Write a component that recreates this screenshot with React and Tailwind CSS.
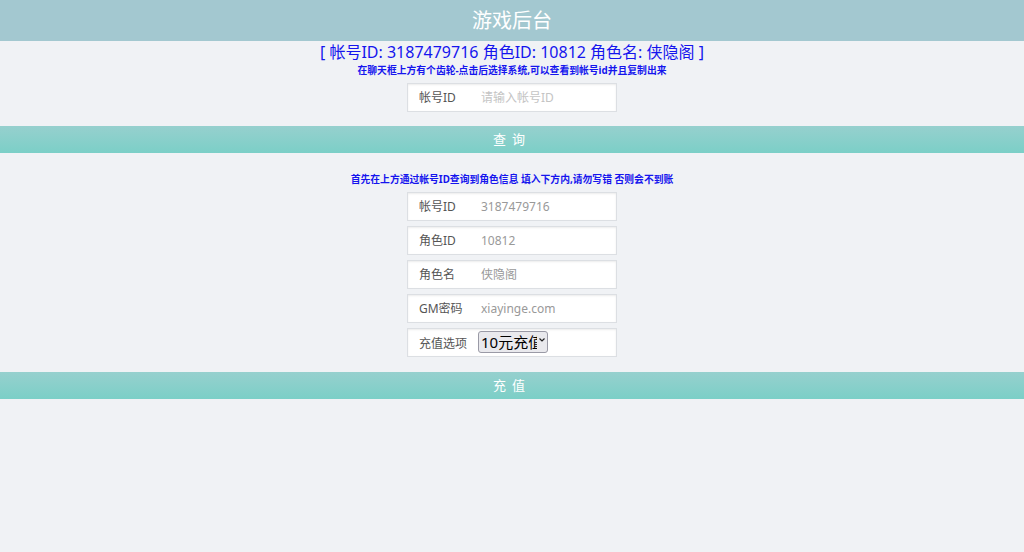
import React from "react";

const font = { fontFamily: '"Noto Sans", "Noto Sans CJK SC", sans-serif' };

function Field({ label, value, placeholder }) {
  return (
    <div className="flex items-center w-[210px] h-[29px] bg-white border border-[#dcdfe3] shadow-[inset_0_1px_2px_rgba(0,0,0,0.08)]">
      <span className="w-[73px] pl-[11px] text-[12px] text-[#555]">{label}</span>
      {value !== undefined ? (
        <span className="text-[12px] text-[#999]">{value}</span>
      ) : (
        <span className="text-[12px] text-[#c4c4c4]">{placeholder}</span>
      )}
    </div>
  );
}

function Bar({ text }) {
  return (
    <div className="w-full h-[27px] bg-gradient-to-b from-[#96d0ce] to-[#7bcfc7] flex items-center justify-center text-white text-[13px] tracking-[6px]">
      {text}
    </div>
  );
}

export default function App() {
  return (
    <div className="w-[1024px] h-[552px] bg-[#f0f2f5] flex flex-col" style={font}>
      <div className="h-[41px] bg-[#a3c8d0] flex items-center justify-center text-white text-[20px]">
        游戏后台
      </div>
      <div className="flex flex-col items-center">
        <div className="mt-[1px] text-[16px] leading-[21px] text-[#1515ee]">
          [ 帐号ID: 3187479716 角色ID: 10812 角色名: 侠隐阁 ]
        </div>
        <div className="mt-[1px] text-[9.8px] leading-[14px] font-bold text-[#1515ee]">
          在聊天框上方有个齿轮-点击后选择系统,可以查看到帐号id并且复制出来
        </div>
        <div className="mt-[5px]">
          <Field label="帐号ID" placeholder="请输入帐号ID" />
        </div>
      </div>
      <div className="mt-[14px]">
        <Bar text="查询" />
      </div>
      <div className="flex flex-col items-center">
        <div className="mt-[20px] text-[9.8px] leading-[14px] font-bold text-[#1515ee]">
          首先在上方通过帐号ID查询到角色信息 填入下方内,请勿写错 否则会不到账
        </div>
        <div className="mt-[5px] flex flex-col gap-[5px]">
          <Field label="帐号ID" value="3187479716" />
          <Field label="角色ID" value="10812" />
          <Field label="角色名" value="侠隐阁" />
          <Field label="GM密码" value="xiayinge.com" />
          <div className="flex items-start w-[210px] h-[29px] bg-white border border-[#dcdfe3] shadow-[inset_0_1px_2px_rgba(0,0,0,0.08)]">
            <span className="w-[70px] pl-[11px] pt-[7px] text-[12px] leading-[16px] text-[#555]">充值选项</span>
            <div className="relative mt-[1px] w-[70px] h-[22px]">
              <select
                className="appearance-none w-[70px] h-[22px] pl-[2px] pr-[10px] text-[15px] leading-[20px] text-black bg-[#e9e9ed] border border-[#9a9aa6] rounded-[3px] overflow-hidden"
                style={font}
                defaultValue="10"
              >
                <option value="10">10元充值</option>
                <option value="20">20元充值</option>
              </select>
              <svg className="absolute right-[3px] top-[8px] pointer-events-none" width="6" height="4" viewBox="0 0 6 4">
                <path d="M0.5 0.5 L3 3 L5.5 0.5" fill="none" stroke="#222" strokeWidth="1.2" />
              </svg>
            </div>
          </div>
        </div>
      </div>
      <div className="mt-[15px]">
        <Bar text="充值" />
      </div>
    </div>
  );
}
